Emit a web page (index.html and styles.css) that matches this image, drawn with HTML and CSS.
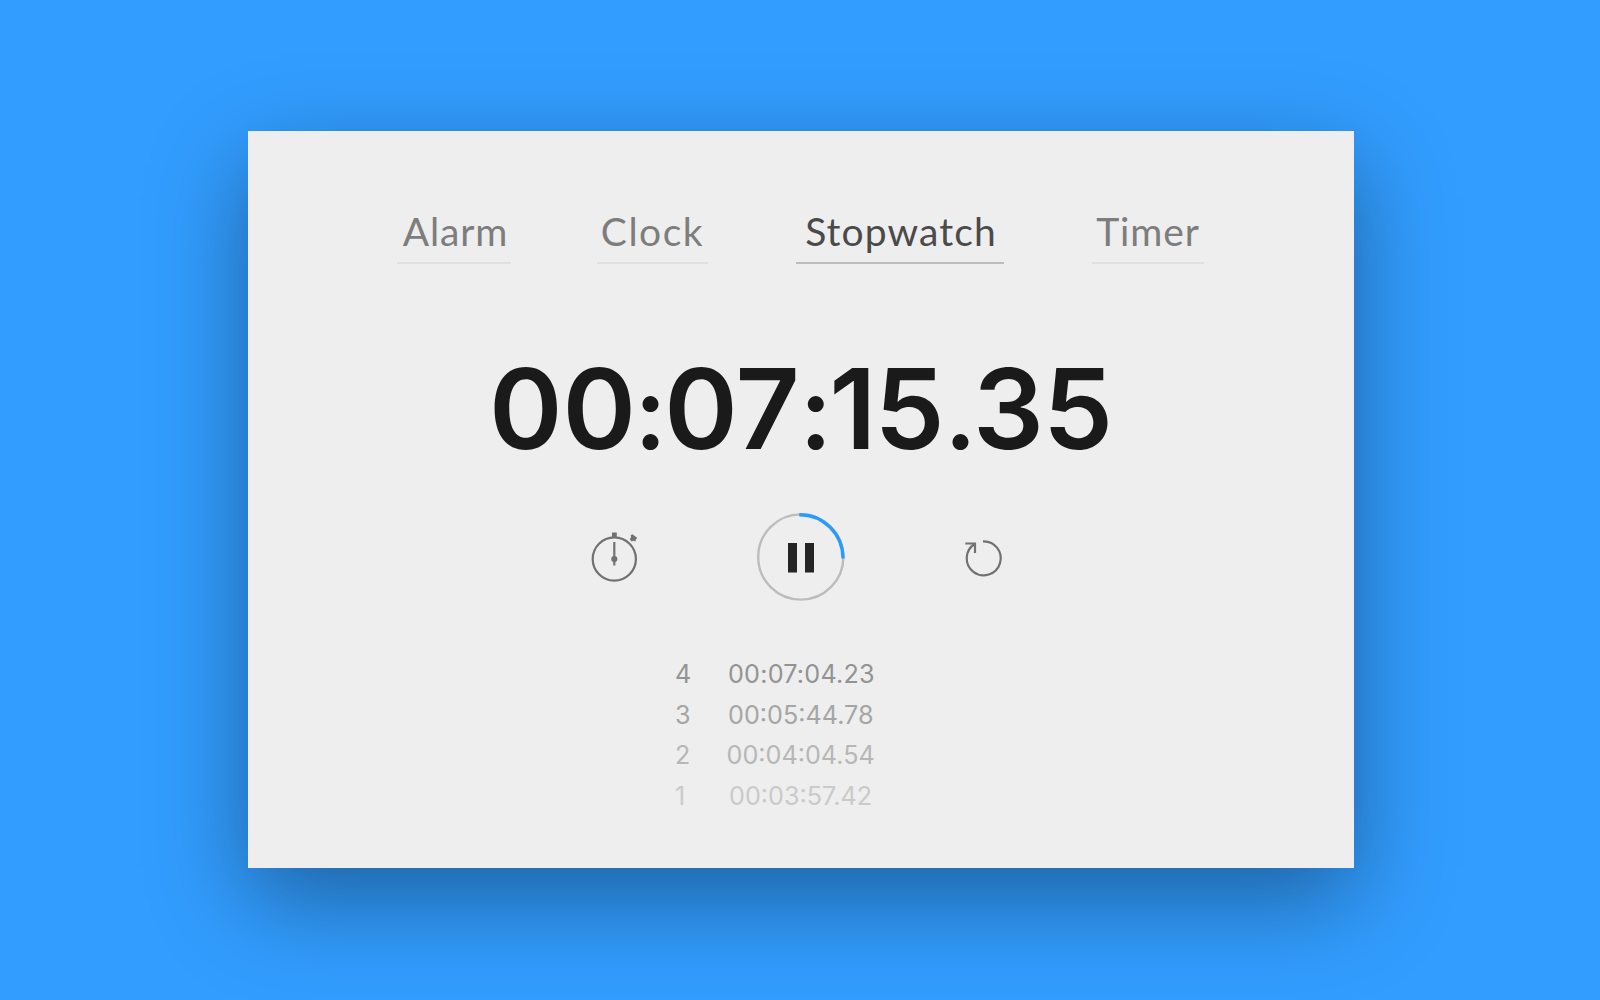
FILE: index.html
```html
<!DOCTYPE html>
<html lang="en">
<head>
<meta charset="utf-8">
<title>Stopwatch</title>
<link rel="stylesheet" href="styles.css">
</head>
<body>
<main class="card">
  <nav class="tabs">
    <a class="tab tab-alarm">Alarm</a>
    <a class="tab tab-clock">Clock</a>
    <a class="tab tab-stopwatch active">Stopwatch</a>
    <a class="tab tab-timer">Timer</a>
  </nav>
  <div class="time">00<span class="dot">:</span>07<span class="dot dot-wide">:</span><span class="tight">1</span>5<span class="dot dot-last">.</span><span class="tight-3">3</span>5</div>
  <div class="controls">
    <svg class="icon-lap" width="48" height="52" viewBox="590 531 48 52" fill="none" stroke="#717171" stroke-width="2.200">
      <circle cx="614.3" cy="559" r="21.6"/>
      <path d="M614.3 542v23.5"/>
      <circle cx="614.3" cy="559" r="3.100" fill="#717171" stroke="none"/>
      <path d="M612 532.5h4.800v5h-4.800z" fill="#717171" stroke="none"/>
      <path d="M632.300 534.300l2.200 1.400 2.800 2.300-1.400 1.200-.4 2.200-2-.6-2 .7-1.800-2.600 1.300-1.400-.3-2.200z" fill="#717171" stroke="none"/>
    </svg>
    <svg class="icon-pause" width="90" height="90" viewBox="756 512 90 90" fill="none">
      <circle cx="800.8" cy="557" r="42.600" stroke="#bcbcbc" stroke-width="2.400"/>
      <path d="M799.300 514.700A43.200 43.600 0 0 1 843 558.500" stroke="#2a9bfa" stroke-width="3.400"/>
      <path d="M788 543h9v29.500h-9zM805 543h9v29.500h-9z" fill="#242424"/>
    </svg>
    <svg class="icon-reset" width="40" height="40" viewBox="964 539 40 40" fill="none" stroke="#717171" stroke-width="2.200">
      <path d="M983 541.300A17 17 0 1 1 974.500 544"/>
      <path d="M965.300 543.500h9.700v9.500"/>
    </svg>
  </div>
  <div class="laps">
    <div class="lap lap-4"><span class="num">4</span><span class="split">00:07:04.23</span></div>
    <div class="lap lap-3"><span class="num">3</span><span class="split">00:05:44.78</span></div>
    <div class="lap lap-2"><span class="num">2</span><span class="split">00:04:04.54</span></div>
    <div class="lap lap-1"><span class="num">1</span><span class="split">00:03:57.42</span></div>
  </div>
</main>
</body>
</html>
```
FILE: styles.css
```css
* { box-sizing: border-box; }
body {
  margin: 0;
  height: 1000px;
  overflow: hidden;
  background: #329dff;
  padding: 131px 0 0 248px;
  font-family: Lato, sans-serif;
}
.card {
  width: 1106px;
  height: 737px;
  background: #eee;
  box-shadow: 0 32px 90px rgba(0, 0, 0, .38);
  display: flex;
  flex-direction: column;
}
.tabs {
  display: flex;
  padding: 77px 0 0 149px;
  height: 133px;
}
.tab {
  height: 56px;
  border-bottom: 2px solid #e0e0e0;
  color: #7d7d7d;
  font-size: 39px;
  line-height: 47px;
  text-align: center;
  white-space: nowrap;
}
.tab-alarm { width: 114px; padding-left: 3px; letter-spacing: .9px; }
.tab-clock { width: 111px; margin-left: 86px; letter-spacing: 1.5px; }
.tab-stopwatch { width: 208px; margin-left: 88px; padding-left: 2px; letter-spacing: 1.1px; }
.tab-timer { width: 112px; margin-left: 88px; letter-spacing: .9px; }
.active { color: #4a4a4a; border-color: #bcbcbc; }
.time {
  height: 248px;
  padding: 79px 0 0 241px;
  font: 600 111.500px/130px Inter, sans-serif;
  color: #1a1a1a;
  white-space: nowrap;
}
.dot {
  margin-left: 1px;
  font-family: Lato, sans-serif;
  font-size: 105px;
  font-weight: 700;
}
.dot-wide { margin-left: 2.5px; }
.dot-last { margin-left: 3.5px; }
.tight { letter-spacing: -2px; }
.tight-3 { letter-spacing: -1px; }
.controls {
  display: flex;
  align-items: flex-start;
  height: 130px;
  padding-left: 342px;
}
.icon-lap { margin-top: 19px; }
.icon-pause { margin-left: 118px; }
.icon-reset { margin: 27px 0 0 118px; }
.laps { padding-top: 12px; }
.lap {
  display: flex;
  height: 40.7px;
  padding-left: 427px;
  font: 400 25.2px/41px Inter, sans-serif;
}
.num { width: 53px; }
.lap-4 { color: #939393; letter-spacing: .2px; }
.lap-3 { color: #a5a5a5; }
.lap-2 { color: #b7b7b7; }
.lap-2 .split { margin-left: -1.5px; }
.lap-1 { color: #cacaca; }
.lap-1 .split { margin-left: 1px; }
```
